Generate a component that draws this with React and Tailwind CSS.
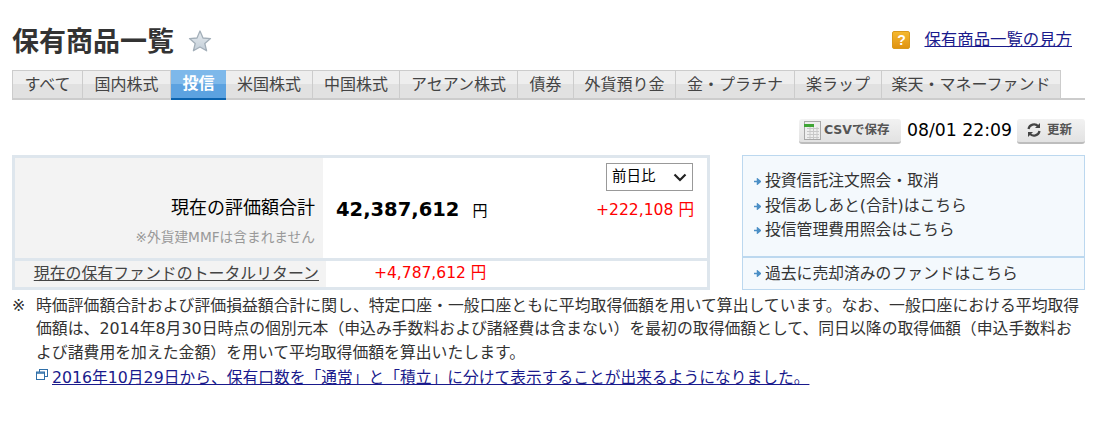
// App.jsx
import React from "react";

const FONT = "font-['DejaVu_Sans','Noto_Sans_CJK_JP',sans-serif]";
const tabs = [
  { name: "すべて", w: "w-[71px]" },
  { name: "国内株式", w: "w-[88px]" },
  { name: "投信", w: "w-[55px]", active: true },
  { name: "米国株式", w: "w-[87px]" },
  { name: "中国株式", w: "w-[87px]" },
  { name: "アセアン株式", w: "w-[118px]" },
  { name: "債券", w: "w-[56px]" },
  { name: "外貨預り金", w: "w-[102px]" },
  { name: "金・プラチナ", w: "w-[119px]" },
  { name: "楽ラップ", w: "w-[87px]" },
  { name: "楽天・マネーファンド", w: "w-[179px]" },
];

const StarIcon = () => (
  <svg width="24" height="24" viewBox="0 0 24 24">
    <defs>
      <linearGradient id="star" x1="0" y1="0" x2="0" y2="1">
        <stop offset="0" stopColor="#e6ebef" />
        <stop offset="1" stopColor="#c3ced8" />
      </linearGradient>
    </defs>
    <path
      d="M12 2l3 7 7.500.6-5.700 4.900 1.800 7.300L12 18l-6.600 3.800 1.800-7.300L1.500 9.600 9 9z"
      fill="url(#star)"
      stroke="#a3afb9"
      strokeWidth="1.300"
      strokeLinejoin="round"
    />
  </svg>
);

const HelpIcon = () => (
  <div className="w-[18px] h-[18px] rounded-[2px] bg-gradient-to-b from-[#f5b82e] to-[#e0930f] border border-[#d89a1c] flex items-center justify-center text-white text-[14px] font-bold leading-none font-['Liberation_Sans',sans-serif]">
    ?
  </div>
);

const CsvIcon = () => (
  <svg width="17" height="19" viewBox="0 0 17 19">
    <rect x="0.500" y="0.500" width="16" height="18" fill="#eeeeee" stroke="#a8a8a8" />
    <path d="M3 7.500h12M3 10.500h12M3 13.500h12M3 16.500h12M6 6v12M9.500 6v12M13 6v12" stroke="#c8c8c8" strokeWidth="1" />
    <rect x="0" y="3" width="10" height="3" fill="#3fa535" />
  </svg>
);

const ReloadIcon = () => (
  <svg width="16" height="16" viewBox="0 0 16 16" fill="none" stroke="#444" strokeWidth="2.200">
    <path d="M2.500 7a5.600 5.600 0 0 1 9.800-2.600" />
    <path d="M13.500 9a5.600 5.600 0 0 1-9.800 2.600" />
    <path d="M14 1v5h-5z" fill="#444" stroke="none" />
    <path d="M2 15v-5h5z" fill="#444" stroke="none" />
  </svg>
);

const ArrowIcon = () => (
  <svg width="7" height="7" viewBox="0 0 7 7" className="shrink-0">
    <path d="M0 3.500h5M3.500 1l3 2.500-3 2.500z" stroke="#4b8fc6" strokeWidth="1.500" fill="#4b8fc6" />
  </svg>
);

const WindowIcon = () => (
  <svg width="12" height="12" viewBox="0 0 12 12" fill="none" stroke="#2f6fa8" className="shrink-0 mt-[-5px]">
    <rect x="3.500" y="0.500" width="8" height="7" strokeWidth="1" />
    <rect x="0.500" y="3" width="8" height="7.500" fill="#fff" strokeWidth="1" />
    <path d="M1 4h7" strokeWidth="1.500" />
  </svg>
);

const SideLink = ({ children }) => (
  <div className="flex items-center gap-[4px] text-[15.800px] text-[#333]">
    <ArrowIcon />
    <span>{children}</span>
  </div>
);

const ToolButton = ({ children, className }) => (
  <div
    className={`h-[25px] flex items-center rounded-[3px] bg-gradient-to-b from-[#f2f2f2] to-[#e2e2e2] border-b-2 border-[#bdbdbd] text-[12.500px] font-bold text-[#555] ${className}`}
  >
    {children}
  </div>
);

export default function App() {
  return (
    <div className={`${FONT} w-[1093px] h-[423px] bg-white pl-[12px] pr-[8px] pt-[24px] text-black overflow-hidden`}>
      {/* title */}
      <div className="flex items-center h-[36px]">
        <h1 className="text-[27px] font-bold text-[#333] leading-[36px]">保有商品一覧</h1>
        <div className="ml-[14px] mt-[-2px]">
          <StarIcon />
        </div>
        <div className="ml-auto flex items-center gap-[14px] pr-[13px] mt-[-4px]">
          <HelpIcon />
          <a className="text-[16.400px] text-[#1a1a8c] underline">保有商品一覧の見方</a>
        </div>
      </div>

      {/* tabs */}
      <div className="mt-[10px] flex h-[30px] border-b-2 border-[#cccccc]">
        {tabs.map((t) => (
          <div
            key={t.name}
            className={
              t.active
                ? `${t.w} h-[30px] shrink-0 flex items-center justify-center text-[16px] font-bold text-white bg-[linear-gradient(#7db8ea_50%,#5ca2e0_50%)] border-b-2 border-[#0a62ad]`
                : `${t.w} h-[28px] shrink-0 flex items-center justify-center text-[16px] text-[#444] bg-[linear-gradient(#eeeeee_50%,#e1e1e1_50%)] border border-b-0 border-l-0 first:border-l border-[#cccccc]`
            }
          >
            {t.name}
          </div>
        ))}
      </div>

      {/* toolbar */}
      <div className="mt-[18px] flex items-center justify-end h-[26px]">
        <ToolButton className="w-[102px] pl-[5px] gap-[3px]">
          <CsvIcon />
          <span>CSVで保存</span>
        </ToolButton>
        <span className="ml-[6px] text-[17.300px] leading-none">08/01 22:09</span>
        <ToolButton className="ml-[5px] w-[68px] pl-[9px] gap-[5px]">
          <ReloadIcon />
          <span>更新</span>
        </ToolButton>
      </div>

      {/* summary */}
      <div className="mt-[11px] flex justify-between">
        <div className="w-[698px] h-[135px] border-[3px] border-[#dee6ed] flex flex-col">
          <div className="flex h-[100px]">
            <div className="w-[308px] bg-[#f3f3f3] flex flex-col items-end pr-[8px] pt-[38px]">
              <span className="text-[18px] leading-[24px]">現在の評価額合計</span>
              <span className="mt-[8px] text-[13.700px] leading-[18px] text-[#999]">※外貨建MMFは含まれません</span>
            </div>
            <div className="flex-1 relative flex pl-[13px] pt-[39px]">
              <span className="text-[19.500px] font-bold leading-[26px]">42,387,612</span>
              <span className="ml-[13px] mt-[3px] text-[15px] leading-[22px]">円</span>
              <div className="absolute right-[14px] top-[5px] w-[87px] h-[28px] border border-[#999] flex items-center justify-between px-[5px] text-[14.500px]">
                <span>前日比</span>
                <svg width="14" height="9" viewBox="0 0 14 9" fill="none" stroke="#222" strokeWidth="2.200">
                  <path d="M1.500 1.500L7 7l5.500-5.500" />
                </svg>
              </div>
              <span className="absolute right-[13px] top-[41px] text-[15.600px] leading-[22px] text-[#f00]">+222,108 円</span>
            </div>
          </div>
          <div className="flex flex-1 border-t-[3px] border-[#dee6ed]">
            <div className="w-[311px] bg-[#f3f3f3] flex items-center justify-end pr-[7px] text-[15.900px] text-[#444] underline">
              現在の保有ファンドのトータルリターン
            </div>
            <div className="flex-1 flex items-center pl-[48px] text-[15.500px] text-[#f00]">+4,787,612 円</div>
          </div>
        </div>

        <div className="w-[343px] h-[135px] border border-[#bcd8ef] bg-[#f4f9fd] flex flex-col">
          <div className="h-[102px] flex flex-col justify-center pl-[11px] leading-[24.500px] border-b-2 border-[#bcd8ef]">
            <SideLink>投資信託注文照会・取消</SideLink>
            <SideLink>投信あしあと(合計)はこちら</SideLink>
            <SideLink>投信管理費用照会はこちら</SideLink>
          </div>
          <div className="flex-1 flex items-center pl-[11px]">
            <SideLink>過去に売却済みのファンドはこちら</SideLink>
          </div>
        </div>
      </div>

      {/* notes */}
      <div className="mt-[4px] flex text-[15.850px] leading-[23.400px] text-[#333]">
        <span className="w-[24px] shrink-0">※</span>
        <div className="w-[1050px]">
          <p>
            時価評価額合計および評価損益額合計に関し、特定口座・一般口座ともに平均取得価額を用いて算出しています。なお、一般口座における平均取得価額は、2014年8月30日時点の個別元本（申込み手数料および諸経費は含まない）を最初の取得価額として、同日以降の取得価額（申込手数料および諸費用を加えた金額）を用いて平均取得価額を算出いたします。
          </p>
          <div className="flex items-center gap-[4px] mt-[2px]">
            <WindowIcon />
            <a className="text-[15.750px] text-[#1a1a8c] underline">2016年10月29日から、保有口数を「通常」と「積立」に分けて表示することが出来るようになりました。</a>
          </div>
        </div>
      </div>
    </div>
  );
}
